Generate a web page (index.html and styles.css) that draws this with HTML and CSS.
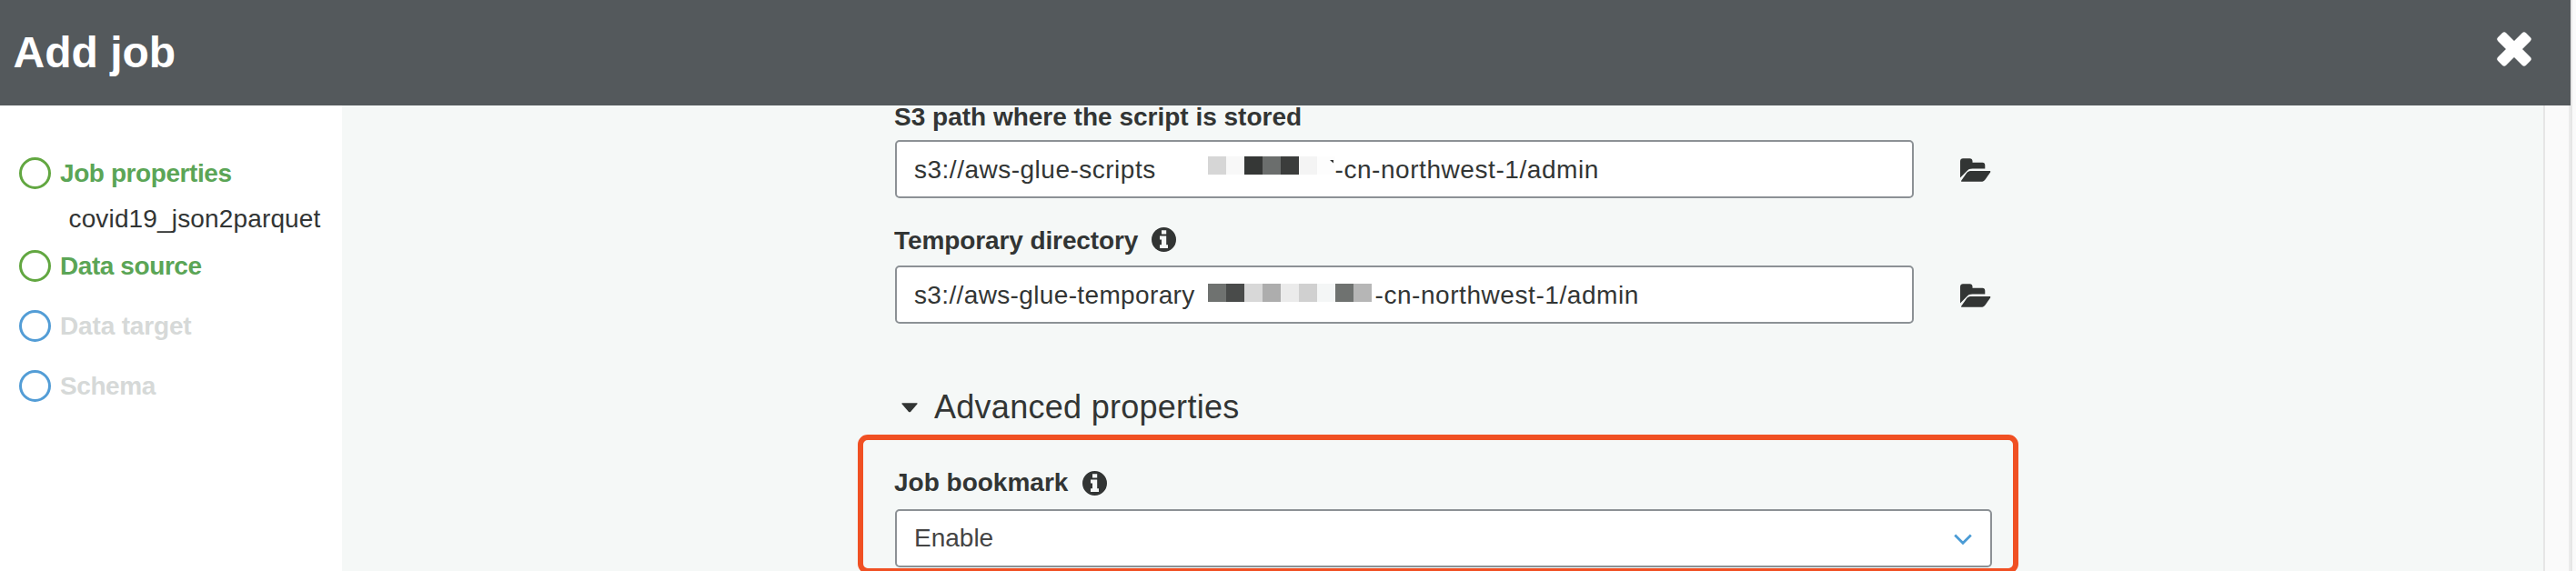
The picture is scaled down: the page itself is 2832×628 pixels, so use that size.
FILE: index.html
```html
<!DOCTYPE html>
<html lang="en">
<head>
<meta charset="utf-8">
<title>Add job</title>
<link rel="stylesheet" href="styles.css">
</head>
<body>
<svg class="defs" width="0" height="0" aria-hidden="true">
  <symbol id="info" viewBox="0 0 27 27">
    <path fill-rule="evenodd" d="M13.5 0a13.5 13.5 0 1 0 0 27a13.5 13.5 0 1 0 0-27zM11 3.2h5.2v4.3H11zM9 9.6h7.2v9.6H18V23H9v-3.800h2v-5.600H9z"/>
  </symbol>
  <symbol id="folder" viewBox="0 0 34 26">
    <path d="M0 21.500V3.500C0 1.300 1.300.200 3 .200h7.500c1.800 0 3 1.300 3 3v1.600h11c1.700 0 2.800 1.300 2.800 3v3.700H13.500c-3 0-4.600.700-6.300 2.800z"/>
    <path d="M12.500 14h19.900c.900 0 1.200.600.700 1.400l-5.600 8c-1.200 1.700-2.600 2.400-4.500 2.400H2c-.9 0-1.200-.7-.7-1.400l6-8.300C8.500 14.500 10.200 14 12.500 14z"/>
  </symbol>
</svg>
<div class="dialog">
  <header class="titlebar">
    <h1>Add job</h1>
    <svg class="close" viewBox="-19 -19 38 38"><rect x="-21.8" y="-6.350" width="43.600" height="12.700" rx="3" transform="rotate(45)"/><rect x="-21.8" y="-6.350" width="43.600" height="12.700" rx="3" transform="rotate(-45)"/></svg>
  </header>
  <div class="body">
    <nav class="steps">
      <div class="step done first"><i class="dot"></i><span class="tight">Job properties</span></div>
      <div class="detail">covid19_json2parquet</div>
      <div class="step done"><i class="dot"></i><span class="tight">Data source</span></div>
      <div class="step"><i class="dot"></i><span class="snug">Data target</span></div>
      <div class="step"><i class="dot"></i><span class="tight">Schema</span></div>
    </nav>
    <main class="content">
      <div class="form">
        <label class="label script-label">S3 path where the script is stored</label>
        <div class="row">
          <div class="input">
            <span class="prefix scripts">s3://aws-glue-scripts</span>
            <span class="mosaic high"><i class="m1"></i><i class="m2"></i><i class="m3"></i><i class="m4"></i><i class="m5"></i><i class="m6"></i><i class="m7"></i></span>
            <svg class="tick" viewBox="0 0 4 4"><path d="M0 0H4V3.500Z"/></svg>
            <span class="suffix">-cn-northwest-1/admin</span>
          </div>
          <svg class="folder"><use href="#folder"/></svg>
        </div>
        <label class="label temp-label">Temporary directory<svg class="info"><use href="#info"/></svg></label>
        <div class="row">
          <div class="input">
            <span class="prefix temporary">s3://aws-glue-temporary</span>
            <span class="mosaic low"><i class="m8"></i><i class="m9"></i><i class="m10"></i><i class="m11"></i><i class="m12"></i><i class="m13"></i><i class="m14"></i><i class="m8"></i><i class="m15"></i></span>
            <span class="suffix">-cn-northwest-1/admin</span>
          </div>
          <svg class="folder"><use href="#folder"/></svg>
        </div>
        <h2 class="section"><svg class="caret" viewBox="0 0 18 11"><path d="M1 .3h16q1.200 0 .5 1L10 9.900q-1 .9-2 0L.5 1.300Q-.2.300 1 .300z"/></svg>Advanced properties</h2>
        <div class="bookmark">
          <label class="label">Job bookmark<svg class="info bookmark-info"><use href="#info"/></svg></label>
          <div class="select"><span>Enable</span><svg class="chevron" viewBox="0 0 20 13"><path d="M1.200 1.500L10 10.300L18.800 1.500"/></svg></div>
          <div class="highlight"></div>
        </div>
      </div>
    </main>
    <div class="gutter"></div>
  </div>
</div>
<div class="edge"></div>
</body>
</html>
```
FILE: styles.css
```css
* { box-sizing: border-box; }
body {
  margin: 0;
  height: 628px;
  overflow: hidden;
  display: flex;
  background: #fafafa;
  color: #323534;
  font: 28px/36px "Liberation Sans", Arial, sans-serif;
}
.defs { position: absolute; }
svg { display: block; flex: none; }
.dialog { width: 2826px; height: 628px; display: flex; flex-direction: column; }
.edge { width: 2px; background: #e6e6e6; }
.titlebar {
  flex: none;
  height: 116px;
  padding: 0 43px 0 14.5px;
  display: flex;
  align-items: flex-start;
  justify-content: space-between;
  background: #54595c;
  color: #fff;
}
h1 { margin: 28px 0 0; font-size: 48px; line-height: 60px; font-weight: 700; }
.close { width: 38px; height: 38px; margin-top: 35px; fill: #fff; }
.body { flex: 1; min-height: 0; display: flex; overflow: hidden; }

.steps { width: 376px; background: #fff; padding: 57px 0 0 20.500px; }
.step { display: flex; align-items: flex-start; height: 36px; margin-bottom: 30px; color: #d6d9d8; font-weight: 700; }
.step.first { margin-bottom: 14px; }
.step.done { color: #5ba556; }
.dot { width: 35px; height: 35px; margin-right: 10.500px; border: 3px solid #539dd6; border-radius: 50%; }
.done .dot { border-color: #62a741; }
.tight { letter-spacing: -.42px; }
.snug { letter-spacing: -.16px; }
.detail { padding-left: 55px; margin: 0 0 16px; letter-spacing: .15px; }

.content { width: 2420px; background: #f5f8f7; padding-left: 608px; overflow: hidden; }
.form { width: 1206px; }
.label { display: flex; height: 36px; margin-left: -1px; line-height: 38px; font-weight: 700; white-space: nowrap; }
.script-label { height: 25px; line-height: 25px; margin-bottom: 13px; }
.temp-label { margin-top: 28px; margin-bottom: 10px; line-height: 37px; letter-spacing: -.1px; }
.info { width: 27px; height: 27px; margin: 4px 0 0 15px; fill: #323534; }
.row { display: flex; align-items: flex-start; }
.input {
  width: 1120px;
  height: 64px;
  padding: 13px 0 0 19px;
  display: flex;
  align-items: flex-start;
  background: #fff;
  border: 2px solid #8c9195;
  border-radius: 5px;
  white-space: nowrap;
}
.folder { width: 34px; height: 26px; margin: 20px 0 0 51px; fill: #323534; }
.prefix { width: 323px; }
.scripts { letter-spacing: .5px; }
.temporary { letter-spacing: .36px; }
.suffix { letter-spacing: .56px; margin-left: 3.500px; }
.mosaic { display: flex; }
.mosaic i { width: 20px; height: 20px; }
.high { margin-top: 3px; width: 134px; }
.high i { flex: none; }
.low { margin-top: 5px; }
.tick { width: 4px; height: 4px; margin-top: 7px; margin-right: -2px; fill: #323534; }
.m1 { background: #d6d6d6; } .m2 { background: #f8f8f8; } .m3 { background: #353736; }
.m4 { background: #6b6e6d; } .m5 { background: #3b3d3c; } .m6 { background: #f4f4f4; }
.m7 { background: #fdfdfd; } .m8 { background: #6f7270; } .m9 { background: #494b4a; }
.m10 { background: #d8d8d8; } .m11 { background: #adadad; } .m12 { background: #ebebeb; }
.m13 { background: #d0d0d0; } .m14 { background: #f4f6f6; } .m15 { background: #b6b6b6; }

.section {
  margin: 70px 0 0 7px;
  height: 44px;
  display: flex;
  font-size: 36px;
  line-height: 44px;
  font-weight: 400;
  letter-spacing: .28px;
}
.caret { width: 18px; height: 11px; margin: 17px 18px 0 0; fill: #323534; }
.bookmark { position: relative; margin-top: 42px; }
.bookmark-info { margin-left: 15.500px; margin-top: 6px; }
.select {
  height: 64px;
  margin-top: 12px;
  padding: 0 20.500px 0 19px;
  display: flex;
  align-items: center;
  justify-content: space-between;
  background: #fff;
  border: 2px solid #8c9195;
  border-radius: 5px;
  color: #444;
}
.chevron { width: 20px; height: 13px; margin-top: 2px; fill: none; stroke: #4a9bd5; stroke-width: 2.700; }
.highlight {
  position: absolute;
  left: -41px;
  top: -34px;
  width: 1276px;
  height: 153px;
  border: 6px solid #f05023;
  border-radius: 11px;
}
.gutter { width: 30px; background: #fafafa; border-left: 2px solid #e6e6e6; border-right: 2px solid #ebebeb; }
```
